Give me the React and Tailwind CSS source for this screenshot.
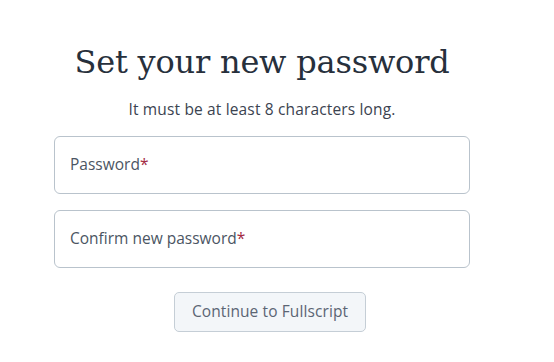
import React from 'react';

const Field = ({ label }) => (
  <div className="h-[58px] w-full rounded-[6px] border border-[#b9c3cc] bg-white flex items-center px-[15px]">
    <span className="text-[15.5px] text-[#4b5563]">
      {label}
      <span className="text-[#a32a43]">*</span>
    </span>
  </div>
);

export default function App() {
  return (
    <div className="min-h-[362px] w-[554px] bg-white font-['Open_Sans','Noto_Sans',sans-serif]">
      <div className="ml-[54px] w-[416px] pt-[38px] flex flex-col items-center">
        <h1 className="text-[32px] leading-[48px] text-[#27303c] font-['DejaVu_Serif','Liberation_Serif',serif] tracking-[-0.2px]">
          Set your new password
        </h1>
        <p className="mt-[13px] text-[15.5px] leading-[20px] text-[#3b4350] tracking-[0.15px]">
          It must be at least 8 characters long.
        </p>
        <div className="mt-[17px] w-full flex flex-col gap-[16px]">
          <Field label="Password" />
          <Field label="Confirm new password" />
        </div>
        <button className="mt-[24px] ml-[16px] h-[40px] w-[192px] rounded-[5px] border border-[#c5ced6] bg-[#f3f6f9] text-[15.5px] tracking-[0.1px] text-[#5b6574]">
          Continue to Fullscript
        </button>
      </div>
    </div>
  );
}
